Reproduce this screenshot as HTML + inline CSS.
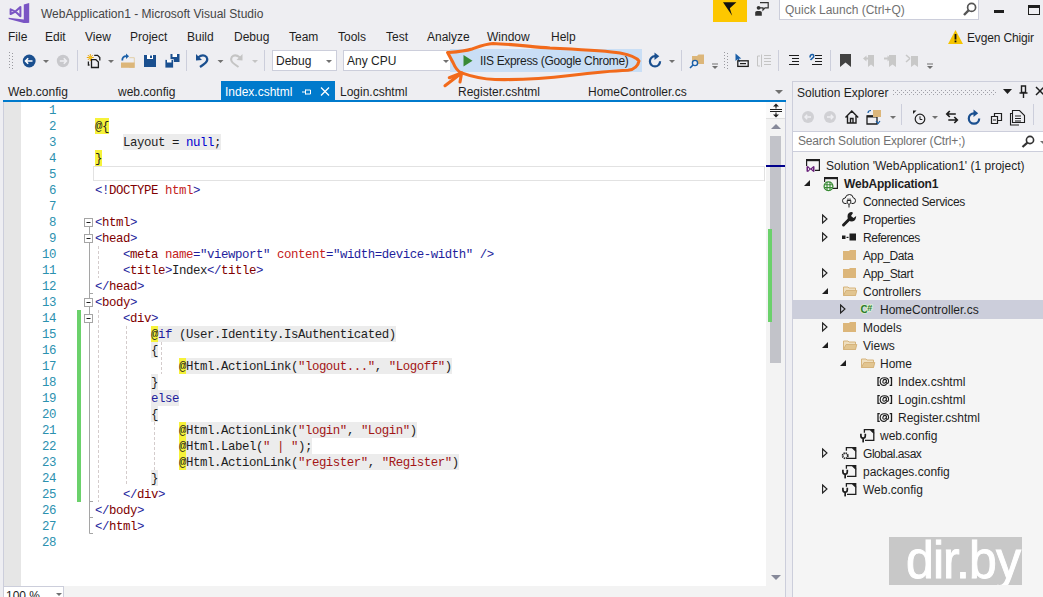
<!DOCTYPE html>
<html><head><meta charset="utf-8">
<style>
*{margin:0;padding:0;box-sizing:border-box}
html,body{width:1043px;height:597px;overflow:hidden;background:#eeeef2;font-family:"Liberation Sans",sans-serif;font-size:12px;color:#1e1e1e;position:relative}
.a{position:absolute}
.t{position:absolute;white-space:pre;line-height:14px}
svg{position:absolute;overflow:visible}
#editor{position:absolute;left:3px;top:102px;width:763px;height:484px;background:#fff}
#margin{position:absolute;left:3px;top:102px;width:18px;height:484px;background:#e6e6e6;border-left:1px solid #cccedb}
.code{position:absolute;font-family:"Liberation Mono",monospace;font-size:12.4px;letter-spacing:-0.44px;line-height:16px;white-space:pre;color:#1e1e1e}
.ln{position:absolute;left:0;width:56px;text-align:right;font-family:"Liberation Mono",monospace;font-size:12.4px;letter-spacing:-0.44px;line-height:16px;color:#2b91af}
.rz{position:absolute;height:16px;background:#ececec}
.at{position:absolute;height:16px;background:#f6f23a}
.sep{position:absolute;width:1px;height:20px;background:#cccedb}
.dd{position:absolute;width:0;height:0;border-left:3px solid transparent;border-right:3px solid transparent;border-top:3px solid #717171}
.se{position:absolute;white-space:pre;line-height:14px}
.tri{position:absolute;width:0;height:0;border-top:4px solid transparent;border-bottom:4px solid transparent;border-left:5px solid #1e1e1e}
.tri.o{border-left-color:#1e1e1e}
</style></head><body>
<!-- ===== TITLE BAR ===== -->
<svg style="left:0;top:0" width="40" height="26" viewBox="0 0 40 26">
 <path fill="#7a55c4" d="M23.8 4.6 L29.2 3 L29.2 22.8 L23.8 22.8 Z"/>
 <path fill="#7a55c4" d="M8.6 17.8 L23.8 19.6 L29.2 22.8 L23.8 23 L8.6 18.9 Z"/>
 <path fill="none" stroke="#7a55c4" stroke-width="2" stroke-linejoin="round" d="M10.6 9.3 L15.4 11.6 L20.4 7 V16.3 L15.4 11.6 L10.6 14 Z"/>
</svg>
<div class="t" style="left:41px;top:7px;color:#444">WebApplication1 - Microsoft Visual Studio</div>

<!-- notification -->
<div class="a" style="left:713px;top:0;width:34px;height:22px;background:#fdc700"></div>
<svg style="left:0;top:0" width="800" height="24" viewBox="0 0 800 24">
 <path d="M723 2.3 L736.4 2.3 L729.8 8.3 L732.2 15.8 Z" fill="#111"/>
 <path d="M760 2.7 H768.2 V7.8 H765 L763 10 V7.8 H760" fill="none" stroke="#333" stroke-width="1.2"/>
 <circle cx="758.6" cy="7.8" r="1.9" fill="#333"/>
 <path d="M755.2 15.8 V12.5 Q755.2 11 757 11 H760 Q761.8 11 761.8 12.5 V15.8 Z" fill="#333"/>
</svg>
<div class="a" style="left:779px;top:0;width:200px;height:20px;background:#fff;border:1px solid #cccedb;border-top:none"></div>
<div class="t" style="left:785px;top:3px;color:#717171">Quick Launch (Ctrl+Q)</div>
<svg style="left:963px;top:2px" width="14" height="14" viewBox="0 0 14 14"><circle cx="8.6" cy="5.4" r="4" fill="none" stroke="#555" stroke-width="1.7"/><path d="M5.8 8.2 L1 13" stroke="#555" stroke-width="2.4"/></svg>
<div class="a" style="left:994px;top:10px;width:10px;height:3px;background:#1e1e1e"></div>
<div class="a" style="left:1028px;top:5px;width:12px;height:10px;border:1px solid #1e1e1e;border-top:3px solid #1e1e1e"></div>

<!-- ===== MENU ===== -->
<div class="t" style="left:8px;top:30px">File</div>
<div class="t" style="left:45px;top:30px">Edit</div>
<div class="t" style="left:85px;top:30px">View</div>
<div class="t" style="left:130px;top:30px">Project</div>
<div class="t" style="left:187px;top:30px">Build</div>
<div class="t" style="left:234px;top:30px">Debug</div>
<div class="t" style="left:289px;top:30px">Team</div>
<div class="t" style="left:338px;top:30px">Tools</div>
<div class="t" style="left:386px;top:30px">Test</div>
<div class="t" style="left:427px;top:30px">Analyze</div>
<div class="t" style="left:487px;top:30px">Window</div>
<div class="t" style="left:551px;top:30px">Help</div>
<svg style="left:948px;top:30px" width="15" height="14" viewBox="0 0 15 14"><path fill="#f5c400" d="M7.5 0 L15 14 L0 14 Z"/><rect x="6.6" y="4" width="1.8" height="5.5" fill="#111"/><rect x="6.6" y="10.5" width="1.8" height="1.8" fill="#111"/></svg>
<div class="t" style="left:967px;top:31px;letter-spacing:-0.15px">Evgen Chigir</div>

<!-- ===== TOOLBAR ===== -->
<svg style="left:0;top:0" width="1043" height="80" viewBox="0 0 1043 80">
 <g fill="#9a9aa0">
  <rect x="9" y="52" width="1" height="1"/><rect x="9" y="55" width="1" height="1"/><rect x="9" y="58" width="1" height="1"/><rect x="9" y="61" width="1" height="1"/><rect x="9" y="64" width="1" height="1"/><rect x="9" y="67" width="1" height="1"/>
  <rect x="12" y="53" width="1" height="1"/><rect x="12" y="56" width="1" height="1"/><rect x="12" y="59" width="1" height="1"/><rect x="12" y="62" width="1" height="1"/><rect x="12" y="65" width="1" height="1"/><rect x="12" y="68" width="1" height="1"/>
  <rect x="724" y="52" width="1" height="1"/><rect x="724" y="55" width="1" height="1"/><rect x="724" y="58" width="1" height="1"/><rect x="724" y="61" width="1" height="1"/><rect x="724" y="64" width="1" height="1"/><rect x="724" y="67" width="1" height="1"/>
  <rect x="727" y="53" width="1" height="1"/><rect x="727" y="56" width="1" height="1"/><rect x="727" y="59" width="1" height="1"/><rect x="727" y="62" width="1" height="1"/><rect x="727" y="65" width="1" height="1"/><rect x="727" y="68" width="1" height="1"/>
 </g>
 <!-- back -->
 <circle cx="29.2" cy="61" r="6.4" fill="#1a4f8f"/>
 <path d="M25.5 61 H32.5 M28.2 58.2 L25.5 61 L28.2 63.8" fill="none" stroke="#fff" stroke-width="1.6"/>
 <path d="M43 60 H49 L46 63 Z" fill="#717171"/>
 <!-- forward gray -->
 <circle cx="63" cy="61" r="6.2" fill="#c8c8cc"/>
 <path d="M59.8 61 H66.4 M63.8 58.3 L66.4 61 L63.8 63.7" fill="none" stroke="#eeeef2" stroke-width="1.6"/>
 <rect x="77" y="50" width="1" height="21" fill="#cccedb"/>
 <!-- new project -->
 <g stroke="#e8a317" stroke-width="1"><path d="M90.3 54 V61 M86.8 57.5 H93.8 M87.8 55 L92.8 60 M92.8 55 L87.8 60"/></g>
 <circle cx="90.3" cy="57.5" r="1.6" fill="#f5c518"/>
 <path d="M94.2 55.3 H97.6 L99.8 57.5 V60.5 M88.4 61.4 V65 H89.5" fill="none" stroke="#1e1e1e" stroke-width="1.3"/>
 <path d="M91.5 59.7 H95.9 L98.4 62 V67.5 H91.5 Z" fill="none" stroke="#1e1e1e" stroke-width="1.3"/>
<path d="M108 60 H114 L111 63 Z" fill="#717171"/>
 <!-- open -->
 <path d="M129.3 57.7 H134.3 V67.5 H129.3" fill="none" stroke="#e2cfa8" stroke-width="1"/>
 <path d="M121 62.5 H134.6 V67.8 H121 Z" fill="#dcb67a"/>
 <path d="M122.3 60.5 Q122 56.2 126.5 56.2" fill="none" stroke="#1a5fa8" stroke-width="1.8"/>
 <path d="M126 53.5 L129 56.2 L126 58.9 Z" fill="#1a5fa8"/>
<!-- save -->
 <path d="M144 55 H156 V67 H144 Z" fill="#1a4f8f"/>
 <rect x="147" y="55" width="6" height="4" fill="#fff"/><rect x="150" y="55.5" width="2" height="2.5" fill="#1a4f8f"/>
 <!-- save all -->
 <path d="M170.5 54 H179.5 V62 H170.5 Z" fill="#1a4f8f"/><rect x="172.5" y="54" width="4.5" height="3" fill="#fff"/>
 <path d="M165 59.5 H173.5 V68 H165 Z" fill="#1a4f8f" stroke="#eeeef2" stroke-width="0.8"/><rect x="167" y="59.5" width="4.5" height="3" fill="#fff"/>
 <rect x="186" y="50" width="1" height="21" fill="#cccedb"/>
 <!-- undo -->
 <path d="M198 57.5 Q203 53.5 206.5 57 Q209 61 203.5 64.5 L200 67" fill="none" stroke="#1a4f8f" stroke-width="2.2"/>
 <path d="M196 54 L196 60.5 L202 60 Z" fill="#1a4f8f"/>
 <path d="M217.5 60 H223.5 L220.5 63 Z" fill="#717171"/>
 <!-- redo gray -->
 <path d="M240 57.5 Q235 53.5 231.8 57 Q229.5 61 235 64.5 L238.5 67" fill="none" stroke="#c4c4c4" stroke-width="2"/>
 <path d="M242.5 54 L242.5 60.5 L236.5 60 Z" fill="#c4c4c4"/>
 <path d="M252 60 H258 L255 63 Z" fill="#c4c4c4"/>
 <rect x="264" y="50" width="1" height="21" fill="#cccedb"/>
 <!-- refresh -->
 <path d="M655 56.2 A5.1 5.1 0 1 0 660.1 61.3" fill="none" stroke="#1a4f8f" stroke-width="2.2"/>
 <path d="M654.5 52.5 L659.3 56.2 L654.5 59.9 Z" fill="#1a4f8f"/>
 <path d="M669 60 H675 L672 63 Z" fill="#717171"/>
 <rect x="681" y="50" width="1" height="21" fill="#cccedb"/>
 <!-- find in files -->
 <path d="M692 56 H697 L698.5 54.5 H704 V64 H692 Z" fill="#dcb67a"/>
 <circle cx="695" cy="63" r="2.6" fill="#eeeef2" stroke="#1a5fa8" stroke-width="1.4"/>
 <path d="M693 65 L690 68" stroke="#1a5fa8" stroke-width="1.6"/>
 <rect x="712" y="63.5" width="6" height="1" fill="#717171"/><path d="M712 66 H718 L715 69 Z" fill="#717171"/>
 <!-- pointer box -->
 <path d="M735.5 53.5 L735.5 61 L737.5 59.3 L739 62 L740.2 61.3 L738.8 58.7 L741.3 58.5 Z" fill="#1a5fa8"/>
 <rect x="737.8" y="60.8" width="10.4" height="5.6" fill="none" stroke="#1e1e1e" stroke-width="1.3"/>
 <rect x="740" y="63" width="6" height="1.2" fill="#1e1e1e"/>
 <!-- gray lines icon -->
 <g stroke="#c4c4c4" stroke-width="1"><path d="M757.5 56 V66 M757.5 56 H760 M757.5 66 H760 M761.5 54.5 V67 M764 55.5 H771 M764 58.5 H771 M764 61.5 H771 M764 64.5 H771"/></g>
 <rect x="778" y="50" width="1" height="21" fill="#cccedb"/>
 <!-- indent icons -->
 <g stroke="#1e1e1e" stroke-width="1"><path d="M789 55.5 H799 M792 58.5 H799 M792 61.5 H799 M789 64.5 H799"/></g>
 <g stroke="#1e1e1e" stroke-width="1"><path d="M815 58.5 H822 M815 61.5 H822 M812 64.5 H822 M815 55.5 H822"/></g>
 <path d="M810 57.5 Q810 54.5 812.3 54.5 Q814.2 54.5 813.6 57 L810.5 60" fill="none" stroke="#1a5fa8" stroke-width="1.5"/>
 <rect x="830" y="50" width="1" height="21" fill="#cccedb"/>
 <!-- bookmark -->
 <path d="M840 54 H851 V67 L845.5 62.5 L840 67 Z" fill="#424242"/>
 <!-- gray bookmark nav -->
 <g fill="#c8c8c8"><path d="M868 55 H874 V67 L871 64.5 L868 67 Z"/><path d="M863 58.5 L866.5 55.5 V57.5 H868 V59.5 H866.5 V61.5 Z"/>
 <path d="M889 55 H896 V67 L892.5 64.5 L889 67 Z"/><path d="M884 57.5 H887.5 V55.5 L891 58.5 L887.5 61.5 V59.5 H884 Z"/>
 <path d="M911 56 H918 V67 L914.5 64.5 L911 67 Z"/><path d="M906 55 L910 58.5 M906 62 L910 58.5" stroke="#c8c8c8" stroke-width="1.6"/></g>
 <rect x="927" y="63.5" width="6" height="1" fill="#717171"/><path d="M927 66 H933 L930 69 Z" fill="#717171"/>
</svg>
<!-- combos -->
<div class="a" style="left:272px;top:50px;width:65px;height:21px;background:#fff;border:1px solid #cccedb"></div>
<div class="t" style="left:276px;top:54px">Debug</div>
<div class="dd" style="left:326px;top:60px"></div>
<div class="a" style="left:343px;top:50px;width:112px;height:21px;background:#fff;border:1px solid #cccedb"></div>
<div class="t" style="left:347px;top:54px">Any CPU</div>
<div class="dd" style="left:443px;top:60px"></div>
<div class="a" style="left:450px;top:49px;width:192px;height:23px;background:#c9def5"></div>
<svg style="left:463px;top:55px" width="10" height="12" viewBox="0 0 10 12"><path d="M0.5 0 L9.5 5.8 L0.5 11.6 Z" fill="#388a34"/></svg>
<div class="t" style="left:480px;top:54px;color:#1e1e1e;letter-spacing:-0.33px">IIS Express (Google Chrome)</div>


<!-- ===== TABS ===== -->
<div class="t" style="left:8px;top:85px">Web.config</div>
<div class="t" style="left:118px;top:85px">web.config</div>
<div class="a" style="left:221px;top:81px;width:114px;height:20px;background:#007acc"></div>
<div class="t" style="left:225px;top:85px;color:#fff">Index.cshtml</div>
<svg style="left:302px;top:88px" width="9" height="8" viewBox="0 0 9 8"><path fill="none" stroke="#fff" stroke-width="1" d="M0 4 H3 M3.5 1.5 V6.5 M3.5 2 H8.5 V6 H3.5"/></svg>
<svg style="left:320px;top:87px" width="10" height="9" viewBox="0 0 10 9"><path stroke="#fff" stroke-width="1.3" d="M1 0.5 L9 8.5 M9 0.5 L1 8.5"/></svg>
<div class="t" style="left:340px;top:85px">Login.cshtml</div>
<div class="t" style="left:458px;top:85px">Register.cshtml</div>
<div class="t" style="left:588px;top:85px">HomeController.cs</div>
<div class="dd" style="left:775px;top:90px;border-left-width:4px;border-right-width:4px;border-top-width:4px"></div>
<div class="a" style="left:3px;top:100px;width:783px;height:2px;background:#007acc"></div>

<!-- ===== EDITOR ===== -->
<div id="editor"></div>
<div id="margin"></div>
<!-- current line -->
<div class="a" style="left:93px;top:166px;width:672px;height:15px;border:1px solid #e2e2e2"></div>
<!-- green change bar -->
<div class="a" style="left:77px;top:310px;width:4px;height:192px;background:#6bd16b"></div>
<!--OUTLINE-->
<div class="a" style="left:0;top:0;width:0;height:0" id="codewrap"></div>
<div class="at" style="left:95px;top:118px;width:14px"></div>
<div class="rz" style="left:123px;top:134px;width:98px"></div>
<div class="at" style="left:95px;top:150px;width:7px"></div>
<div class="at" style="left:151px;top:326px;width:7px"></div>
<div class="rz" style="left:158px;top:326px;width:238px"></div>
<div class="rz" style="left:151px;top:342px;width:7px"></div>
<div class="at" style="left:179px;top:358px;width:7px"></div>
<div class="rz" style="left:186px;top:358px;width:266px"></div>
<div class="rz" style="left:151px;top:374px;width:7px"></div>
<div class="rz" style="left:151px;top:390px;width:28px"></div>
<div class="rz" style="left:151px;top:406px;width:7px"></div>
<div class="at" style="left:179px;top:422px;width:7px"></div>
<div class="rz" style="left:186px;top:422px;width:231px"></div>
<div class="at" style="left:179px;top:438px;width:7px"></div>
<div class="rz" style="left:186px;top:438px;width:126px"></div>
<div class="at" style="left:179px;top:454px;width:7px"></div>
<div class="rz" style="left:186px;top:454px;width:273px"></div>
<div class="rz" style="left:151px;top:470px;width:7px"></div>
<svg style="left:0;top:0" width="800" height="597" viewBox="0 0 800 597"><path d="M89.5 226 V533.5 H93" fill="none" stroke="#a5a5a5" stroke-width="1"/><path d="M89.5 293.5 H93" fill="none" stroke="#a5a5a5" stroke-width="1"/><path d="M89.5 517.5 H93" fill="none" stroke="#a5a5a5" stroke-width="1"/><path d="M89.5 501.5 H93" fill="none" stroke="#a5a5a5" stroke-width="1"/><rect x="84.5" y="218.5" width="8" height="8" fill="#fff" stroke="#a5a5a5" stroke-width="1"/><path d="M86.5 222.5 H90.5" stroke="#1e1e1e" stroke-width="1"/><rect x="84.5" y="234.5" width="8" height="8" fill="#fff" stroke="#a5a5a5" stroke-width="1"/><path d="M86.5 238.5 H90.5" stroke="#1e1e1e" stroke-width="1"/><rect x="84.5" y="298.5" width="8" height="8" fill="#fff" stroke="#a5a5a5" stroke-width="1"/><path d="M86.5 302.5 H90.5" stroke="#1e1e1e" stroke-width="1"/><rect x="84.5" y="314.5" width="8" height="8" fill="#fff" stroke="#a5a5a5" stroke-width="1"/><path d="M86.5 318.5 H90.5" stroke="#1e1e1e" stroke-width="1"/><path d="M98.5 246 V278" stroke="#d4cccc" stroke-width="1" stroke-dasharray="3 2"/><path d="M98.5 310 V502" stroke="#d4cccc" stroke-width="1" stroke-dasharray="3 2"/><path d="M126.5 326 V486" stroke="#d4cccc" stroke-width="1" stroke-dasharray="3 2"/><path d="M161.5 342 V374" stroke="#d4cccc" stroke-width="1" stroke-dasharray="3 2"/><path d="M154.5 422 V470" stroke="#d4cccc" stroke-width="1" stroke-dasharray="3 2"/></svg>
<div class="ln" style="top:103px">1</div>
<div class="ln" style="top:119px">2</div>
<div class="code" style="left:95px;top:119px"><span style="color:#1e1e1e">@</span><span style="color:#1e1e1e">{</span></div>
<div class="ln" style="top:135px">3</div>
<div class="code" style="left:95px;top:135px">    <span style="color:#1e1e1e">Layout = </span><span style="color:#0000d0">null</span><span style="color:#1e1e1e">;</span></div>
<div class="ln" style="top:151px">4</div>
<div class="code" style="left:95px;top:151px"><span style="color:#1e1e1e">}</span></div>
<div class="ln" style="top:167px">5</div>
<div class="ln" style="top:183px">6</div>
<div class="code" style="left:95px;top:183px"><span style="color:#1e1e9c">&lt;!</span><span style="color:#800000">DOCTYPE </span><span style="color:#c42020">html</span><span style="color:#1e1e9c">&gt;</span></div>
<div class="ln" style="top:199px">7</div>
<div class="ln" style="top:215px">8</div>
<div class="code" style="left:95px;top:215px"><span style="color:#1e1e9c">&lt;</span><span style="color:#800000">html</span><span style="color:#1e1e9c">&gt;</span></div>
<div class="ln" style="top:231px">9</div>
<div class="code" style="left:95px;top:231px"><span style="color:#1e1e9c">&lt;</span><span style="color:#800000">head</span><span style="color:#1e1e9c">&gt;</span></div>
<div class="ln" style="top:247px">10</div>
<div class="code" style="left:95px;top:247px">    <span style="color:#1e1e9c">&lt;</span><span style="color:#800000">meta </span><span style="color:#c42020">name</span><span style="color:#1e1e9c">=&quot;viewport&quot; </span><span style="color:#c42020">content</span><span style="color:#1e1e9c">=&quot;width=device-width&quot; /&gt;</span></div>
<div class="ln" style="top:263px">11</div>
<div class="code" style="left:95px;top:263px">    <span style="color:#1e1e9c">&lt;</span><span style="color:#800000">title</span><span style="color:#1e1e9c">&gt;</span><span style="color:#1e1e1e">Index</span><span style="color:#1e1e9c">&lt;/</span><span style="color:#800000">title</span><span style="color:#1e1e9c">&gt;</span></div>
<div class="ln" style="top:279px">12</div>
<div class="code" style="left:95px;top:279px"><span style="color:#1e1e9c">&lt;/</span><span style="color:#800000">head</span><span style="color:#1e1e9c">&gt;</span></div>
<div class="ln" style="top:295px">13</div>
<div class="code" style="left:95px;top:295px"><span style="color:#1e1e9c">&lt;</span><span style="color:#800000">body</span><span style="color:#1e1e9c">&gt;</span></div>
<div class="ln" style="top:311px">14</div>
<div class="code" style="left:95px;top:311px">    <span style="color:#1e1e9c">&lt;</span><span style="color:#800000">div</span><span style="color:#1e1e9c">&gt;</span></div>
<div class="ln" style="top:327px">15</div>
<div class="code" style="left:95px;top:327px">        <span style="color:#1e1e1e">@</span><span style="color:#1e1e9c">if</span><span style="color:#1e1e1e"> (User.Identity.IsAuthenticated)</span></div>
<div class="ln" style="top:343px">16</div>
<div class="code" style="left:95px;top:343px">        <span style="color:#1e1e1e">{</span></div>
<div class="ln" style="top:359px">17</div>
<div class="code" style="left:95px;top:359px">            <span style="color:#1e1e1e">@</span><span style="color:#1e1e1e">Html.ActionLink(</span><span style="color:#a31515">&quot;logout...&quot;</span><span style="color:#1e1e1e">, </span><span style="color:#a31515">&quot;Logoff&quot;</span><span style="color:#1e1e1e">)</span></div>
<div class="ln" style="top:375px">18</div>
<div class="code" style="left:95px;top:375px">        <span style="color:#1e1e1e">}</span></div>
<div class="ln" style="top:391px">19</div>
<div class="code" style="left:95px;top:391px">        <span style="color:#1e1e9c">else</span></div>
<div class="ln" style="top:407px">20</div>
<div class="code" style="left:95px;top:407px">        <span style="color:#1e1e1e">{</span></div>
<div class="ln" style="top:423px">21</div>
<div class="code" style="left:95px;top:423px">            <span style="color:#1e1e1e">@</span><span style="color:#1e1e1e">Html.ActionLink(</span><span style="color:#a31515">&quot;login&quot;</span><span style="color:#1e1e1e">, </span><span style="color:#a31515">&quot;Login&quot;</span><span style="color:#1e1e1e">)</span></div>
<div class="ln" style="top:439px">22</div>
<div class="code" style="left:95px;top:439px">            <span style="color:#1e1e1e">@</span><span style="color:#1e1e1e">Html.Label(</span><span style="color:#a31515">&quot; | &quot;</span><span style="color:#1e1e1e">);</span></div>
<div class="ln" style="top:455px">23</div>
<div class="code" style="left:95px;top:455px">            <span style="color:#1e1e1e">@</span><span style="color:#1e1e1e">Html.ActionLink(</span><span style="color:#a31515">&quot;register&quot;</span><span style="color:#1e1e1e">, </span><span style="color:#a31515">&quot;Register&quot;</span><span style="color:#1e1e1e">)</span></div>
<div class="ln" style="top:471px">24</div>
<div class="code" style="left:95px;top:471px">        <span style="color:#1e1e1e">}</span></div>
<div class="ln" style="top:487px">25</div>
<div class="code" style="left:95px;top:487px">    <span style="color:#1e1e9c">&lt;/</span><span style="color:#800000">div</span><span style="color:#1e1e9c">&gt;</span></div>
<div class="ln" style="top:503px">26</div>
<div class="code" style="left:95px;top:503px"><span style="color:#1e1e9c">&lt;/</span><span style="color:#800000">body</span><span style="color:#1e1e9c">&gt;</span></div>
<div class="ln" style="top:519px">27</div>
<div class="code" style="left:95px;top:519px"><span style="color:#1e1e9c">&lt;/</span><span style="color:#800000">html</span><span style="color:#1e1e9c">&gt;</span></div>
<div class="ln" style="top:535px">28</div>

<!-- editor scrollbar -->
<div class="a" style="left:766px;top:102px;width:20px;height:484px;background:#f3f3f3"></div>
<div class="a" style="left:766px;top:102px;width:20px;height:17px;background:#fafafa;border-bottom:1px solid #e0e0e0"></div>
<svg style="left:768px;top:103px" width="16" height="15" viewBox="0 0 16 15"><path fill="none" stroke="#1e1e1e" stroke-width="1.1" d="M2 6.5 H14 M2 8.5 H14 M8 2.5 V5.5 M8 9.5 V12.5"/><path fill="#1e1e1e" d="M8 0.5 L5 3.5 H11 Z M8 14.5 L5 11.5 H11 Z"/></svg>
<div class="a" style="left:771px;top:124px;width:0;height:0;border-left:5px solid transparent;border-right:5px solid transparent;border-bottom:5px solid #868999"></div>
<div class="a" style="left:770px;top:136px;width:11px;height:227px;background:#c2c3c9"></div>
<div class="a" style="left:768px;top:229px;width:4px;height:93px;background:#6bd16b"></div>
<div class="a" style="left:766px;top:165px;width:20px;height:2px;background:#00008b"></div>
<div class="a" style="left:771px;top:575px;width:0;height:0;border-left:5px solid transparent;border-right:5px solid transparent;border-top:5px solid #868999"></div>
<div class="a" style="left:785px;top:102px;width:1px;height:495px;background:#cccedb"></div>
<!-- bottom bar -->
<div class="a" style="left:3px;top:586px;width:782px;height:11px;background:#f3f3f3"></div>
<div class="a" style="left:3px;top:586px;width:61px;height:14px;background:#fff;border:1px solid #cccedb"></div>
<div class="t" style="left:6px;top:589px">100 %</div>
<div class="dd" style="left:56px;top:593px"></div>

<!-- annotation -->
<svg style="left:0;top:0" width="1043" height="100" viewBox="0 0 1043 100">
 <g fill="none" stroke="#f26a1b" stroke-width="3.1" stroke-linecap="round" stroke-linejoin="round">
  <path d="M461.6 72.9 C457.5 71.5 455.5 68.5 453 62.5 L447.6 52.5 C455 52 464 51.5 472 49 C479 46.5 485 44 493 43.5 C510 44 530 46.5 550 48 C580 49.5 605 50.5 620 53 C630 55 637 58 639 61 C638 66 634 69.5 628 70.3 C610 71 595 72.5 570 75.5 C545 78.5 520 80 495 79.5 C480 79 470 76 461.6 72.9"/>
  <path d="M445 85.7 L461.6 72.9 M449.3 77.7 L461.6 72.9 M460 82 L461.6 72.9"/>
 </g>
</svg>
<div class="a" style="left:792px;top:81px;width:251px;height:516px;background:#eeeef2;border-left:1px solid #cccedb;border-top:1px solid #cccedb"></div>
<div class="t" style="left:797px;top:86px">Solution Explorer</div>
<svg style="left:893px;top:90px" width="103" height="6" viewBox="0 0 103 6"><defs><pattern id="gp" width="4" height="4" patternUnits="userSpaceOnUse"><rect x="0" y="0" width="1" height="1" fill="#a0a0a8"/><rect x="2" y="2" width="1" height="1" fill="#a0a0a8"/></pattern></defs><rect width="103" height="5" fill="url(#gp)"/></svg>
<svg style="left:1003px;top:89px" width="9" height="5" viewBox="0 0 9 5"><path d="M0 0 H9 L4.5 5 Z" fill="#1e1e1e"/></svg>
<svg style="left:1019px;top:85px" width="9" height="14" viewBox="0 0 9 14"><path d="M2.5 1 H6.5 V7.5 H2.5 Z M0.5 8 H8.5 M4.5 8 V13" fill="none" stroke="#1e1e1e" stroke-width="1.4"/></svg>
<svg style="left:1035px;top:86px" width="10" height="10" viewBox="0 0 10 10"><path d="M1 1 L9 9 M9 1 L1 9" stroke="#1e1e1e" stroke-width="1.5"/></svg>
<svg style="left:0;top:0" width="1043" height="160" viewBox="0 0 1043 160">
 <circle cx="808" cy="117" r="6" fill="#d0d0d4"/><path d="M805 117 H811 M807.2 114.8 L805 117 L807.2 119.2" fill="none" stroke="#eeeef2" stroke-width="1.4"/>
 <circle cx="830" cy="117" r="6" fill="#d0d0d4"/><path d="M827 117 H833 M830.8 114.8 L833 117 L830.8 119.2" fill="none" stroke="#eeeef2" stroke-width="1.4"/>
 <path d="M845.5 117.5 L851.8 111 L858.2 117.5 M847.5 116 V123 H856 V116 M850.5 123 V118.5 H853 V123" fill="none" stroke="#1e1e1e" stroke-width="1.4"/>
 <path d="M867 116 H877 V124 H867 Z" fill="none" stroke="#1e1e1e" stroke-width="1.3"/><rect x="867" y="115.5" width="10" height="2" fill="#1e1e1e"/>
 <rect x="873" y="110" width="8" height="7" fill="#dcb67a"/>
 <path d="M868 113 Q868 110.5 871 110.5" fill="none" stroke="#1a5fa8" stroke-width="1.2"/><path d="M880 121 L878 123.5 L876 121" fill="none" stroke="#1a5fa8" stroke-width="1.2"/>
 <path d="M890 116 H896 L893 119 Z" fill="#717171"/>
 <rect x="901" y="104" width="1" height="21" fill="#cccedb"/>
 <path d="M913 110.5 L916.5 110.5 L913 114 Z" fill="#1e1e1e"/>
 <circle cx="920" cy="119" r="4.8" fill="none" stroke="#1e1e1e" stroke-width="1.2"/><path d="M920 116.3 V119.5 H922.3" fill="none" stroke="#1e1e1e" stroke-width="1"/>
 <path d="M932 116 H938 L935 119 Z" fill="#717171"/>
 <path d="M947 114 H955.8 M949.8 111 L946.8 114 L949.8 117 M948.3 120 H957.3 M954.3 117 L957.3 120 L954.3 123" fill="none" stroke="#1e1e1e" stroke-width="1.7"/>
 <path d="M974 113.3 A5.2 5.2 0 1 0 979.2 118.5" fill="none" stroke="#1a4f8f" stroke-width="2.2"/><path d="M973.5 109.6 L978.2 113.3 L973.5 117 Z" fill="#1a4f8f"/>
 <path d="M991.5 116.5 H997.5 V123.5 H991.5 Z M994.5 116.5 V113.5 H1001.5 V120.5 H997.5 M993 120 H996" fill="none" stroke="#1e1e1e" stroke-width="1.2"/>
 <path d="M1013 113.5 H1010.5 V125 H1019 M1012.5 110.5 H1019.5 L1024.5 115.5 V122.5 H1012.5 Z M1015 116 H1021 M1015 118.5 H1021 M1015 121 H1021" fill="none" stroke="#1e1e1e" stroke-width="1.1"/>
 <rect x="1033" y="104" width="1" height="21" fill="#cccedb"/>
</svg>
<div class="a" style="left:793px;top:131px;width:250px;height:21px;background:#fff;border-top:1px solid #cccedb;border-bottom:1px solid #cccedb"></div>
<div class="t" style="left:798px;top:134px;color:#717171;letter-spacing:-0.18px">Search Solution Explorer (Ctrl+;)</div>
<svg style="left:1021px;top:135px" width="14" height="13" viewBox="0 0 14 13"><circle cx="9" cy="5" r="3.6" fill="none" stroke="#333" stroke-width="1.6"/><path d="M6.4 7.6 L1.5 12" stroke="#333" stroke-width="2.2"/></svg>
<div class="dd" style="left:1040px;top:141px"></div>
<div class="a" style="left:793px;top:152px;width:250px;height:445px;background:#f5f5f5"></div>
<div class="a" style="left:793px;top:300px;width:250px;height:19px;background:#cccedb"></div>
<div class="se" style="left:826px;top:159px;">Solution &#x27;WebApplication1&#x27; (1 project)</div>
<div class="se" style="left:844px;top:177px;font-weight:bold;letter-spacing:-0.2px;">WebApplication1</div>
<div class="se" style="left:863px;top:195px;letter-spacing:-0.3px;">Connected Services</div>
<div class="se" style="left:863px;top:213px;letter-spacing:-0.25px;">Properties</div>
<div class="se" style="left:863px;top:231px;letter-spacing:-0.45px;">References</div>
<div class="se" style="left:863px;top:249px;letter-spacing:-0.4px;">App_Data</div>
<div class="se" style="left:863px;top:267px;letter-spacing:-0.35px;">App_Start</div>
<div class="se" style="left:863px;top:285px;">Controllers</div>
<div class="se" style="left:880px;top:303px;">HomeController.cs</div>
<div class="se" style="left:863px;top:321px;">Models</div>
<div class="se" style="left:863px;top:339px;">Views</div>
<div class="se" style="left:880px;top:357px;">Home</div>
<div class="se" style="left:898px;top:375px;">Index.cshtml</div>
<div class="se" style="left:898px;top:393px;">Login.cshtml</div>
<div class="se" style="left:898px;top:411px;">Register.cshtml</div>
<div class="se" style="left:880px;top:429px;">web.config</div>
<div class="se" style="left:863px;top:447px;letter-spacing:-0.45px;">Global.asax</div>
<div class="se" style="left:863px;top:465px;">packages.config</div>
<div class="se" style="left:863px;top:483px;">Web.config</div>
<svg style="left:0;top:0" width="1043" height="597" viewBox="0 0 1043 597"><path d="M806.6 166 V159.6 H819.4 V170.4 H815" fill="none" stroke="#1e1e1e" stroke-width="1.2"/><rect x="806" y="159" width="14" height="2.2" fill="#1e1e1e"/><path d="M806.5 166.5 L808 166 L810.5 168.5 L813.5 166 L814.5 166.5 V171.5 L813.5 172 L810.5 169.5 L808 172 L806.5 171.5 Z" fill="#68217a"/><path d="M808 167.8 V170.5 L809.5 169.1 Z M812 169 L813 168 V170 Z" fill="#f5f5f5"/><path d="M804 186 L810 180 L810 186 Z" fill="#1e1e1e"/><path d="M824.6 182 V177.6 H837.4 V188.4 H833" fill="none" stroke="#1e1e1e" stroke-width="1.2"/><rect x="824" y="177" width="14" height="2.2" fill="#1e1e1e"/><circle cx="828.5" cy="186.2" r="4.4" fill="#f5f5f5" stroke="#388a34" stroke-width="1.3"/><path d="M827 182 V190.5 M830 182 V190.5 M824.3 184.8 H832.7 M824.3 187.6 H832.7" stroke="#388a34" stroke-width="1.1"/><path d="M846.5 203.5 H845 Q842.5 203.5 842.5 200.7 Q842.5 198 845.2 198 Q846 194.5 849.5 194.5 Q852.8 194.5 853.2 197.8 Q855.5 198 855.5 200.7 Q855.5 203.5 853 203.5 H851.5" fill="none" stroke="#1e1e1e" stroke-width="1"/><path d="M847.2 200.5 H850.8 V203 L849 204.5 L847.2 203 Z" fill="none" stroke="#1e1e1e" stroke-width="1"/><path d="M849 204.5 V207.5 M848 198.5 V200.5 M850 198.5 V200.5" stroke="#1e1e1e" stroke-width="1"/><path d="M822.6 215 L827 219 L822.6 223 Z" fill="none" stroke="#1e1e1e" stroke-width="1.1"/><path d="M843.5 225 L849 219.5" stroke="#1e1e1e" stroke-width="3" stroke-linecap="round"/><path d="M852 212 Q847.5 212 847.5 216.5 Q847.5 221.5 852 221.5 Q856 221 856.2 216 L853.5 218 L851 216 L853 213 Z" fill="#1e1e1e"/><path d="M822.6 233 L827 237 L822.6 241 Z" fill="none" stroke="#1e1e1e" stroke-width="1.1"/><rect x="842" y="235.5" width="3.5" height="3.5" fill="#1e1e1e"/><rect x="846.5" y="236.8" width="2" height="1.2" fill="#1e1e1e"/><rect x="849.5" y="233.5" width="6.5" height="7" fill="#1e1e1e"/><path d="M843 251 H849 L850 250 H856 V260 H843 Z" fill="#dcb67a"/><path d="M822.6 269 L827 273 L822.6 277 Z" fill="none" stroke="#1e1e1e" stroke-width="1.1"/><path d="M843 269 H849 L850 268 H856 V278 H843 Z" fill="#dcb67a"/><path d="M822 294 L828 288 L828 294 Z" fill="#1e1e1e"/><path d="M843.5 295.5 V287 H848 L849 288 H855.5 V295.5 Z" fill="#efdfbf" stroke="#d6b47c" stroke-width="1"/><path d="M843.5 295.5 L846 290.5 H856.8 L855.5 295.5 Z" fill="#e2c590" stroke="#d6b47c" stroke-width="1"/><path d="M840.6 305 L845 309 L840.6 313 Z" fill="none" stroke="#1e1e1e" stroke-width="1.1"/><g font-family="Liberation Sans" font-weight="bold" fill="#2f7a2c" stroke="#d8f0d0" stroke-width="1.6" paint-order="stroke"><text x="860.5" y="313" font-size="10.5">C</text><text x="867.3" y="311" font-size="9">#</text></g><path d="M822.6 323 L827 327 L822.6 331 Z" fill="none" stroke="#1e1e1e" stroke-width="1.1"/><path d="M843 323 H849 L850 322 H856 V332 H843 Z" fill="#dcb67a"/><path d="M822 348 L828 342 L828 348 Z" fill="#1e1e1e"/><path d="M843.5 349.5 V341 H848 L849 342 H855.5 V349.5 Z" fill="#efdfbf" stroke="#d6b47c" stroke-width="1"/><path d="M843.5 349.5 L846 344.5 H856.8 L855.5 349.5 Z" fill="#e2c590" stroke="#d6b47c" stroke-width="1"/><path d="M840 366 L846 360 L846 366 Z" fill="#1e1e1e"/><path d="M861.5 367.5 V359 H866 L867 360 H873.5 V367.5 Z" fill="#efdfbf" stroke="#d6b47c" stroke-width="1"/><path d="M861.5 367.5 L864 362.5 H874.8 L873.5 367.5 Z" fill="#e2c590" stroke="#d6b47c" stroke-width="1"/><path d="M879.8 377.7 H878 V385.3 H879.8 M889.7 377.7 H891.5 V385.3 H889.7" fill="none" stroke="#1e1e1e" stroke-width="1.3"/><path d="M886.6 384.3 Q884.8 385.6 883.5 385.4 Q880.2 385 880.2 381.6 Q880.2 377.8 884.6 377.8 Q888.6 377.8 888.6 381.4 Q888.6 383.4 887.1 383.4 Q886.1 383.4 886.3 382 L886.6 379.8 M886.4 381.2 Q886 383.2 884.2 383.2 Q882.6 383.2 882.9 381.4 Q883.3 379.4 884.9 379.4 Q886.5 379.4 886.4 381.2" fill="none" stroke="#1e1e1e" stroke-width="1.1"/><path d="M879.8 395.7 H878 V403.3 H879.8 M889.7 395.7 H891.5 V403.3 H889.7" fill="none" stroke="#1e1e1e" stroke-width="1.3"/><path d="M886.6 402.3 Q884.8 403.6 883.5 403.4 Q880.2 403 880.2 399.6 Q880.2 395.8 884.6 395.8 Q888.6 395.8 888.6 399.4 Q888.6 401.4 887.1 401.4 Q886.1 401.4 886.3 400 L886.6 397.8 M886.4 399.2 Q886 401.2 884.2 401.2 Q882.6 401.2 882.9 399.4 Q883.3 397.4 884.9 397.4 Q886.5 397.4 886.4 399.2" fill="none" stroke="#1e1e1e" stroke-width="1.1"/><path d="M879.8 413.7 H878 V421.3 H879.8 M889.7 413.7 H891.5 V421.3 H889.7" fill="none" stroke="#1e1e1e" stroke-width="1.3"/><path d="M886.6 420.3 Q884.8 421.6 883.5 421.4 Q880.2 421 880.2 417.6 Q880.2 413.8 884.6 413.8 Q888.6 413.8 888.6 417.4 Q888.6 419.4 887.1 419.4 Q886.1 419.4 886.3 418 L886.6 415.8 M886.4 417.2 Q886 419.2 884.2 419.2 Q882.6 419.2 882.9 417.4 Q883.3 415.4 884.9 415.4 Q886.5 415.4 886.4 417.2" fill="none" stroke="#1e1e1e" stroke-width="1.1"/><path d="M864.4 432.7 V429.7 H870.4 L873.8 433.1 V440.4 H865" fill="none" stroke="#1e1e1e" stroke-width="1.3"/><path d="M870 429.1 L874.4 433.5 V429.1 Z" fill="#1e1e1e"/><path d="M860.9 433.7 V435.8 Q860.9 438.2 863.1 438.2 Q865.3 438.2 865.3 435.8 V433.7" fill="none" stroke="#1e1e1e" stroke-width="1.7"/><rect x="862.3" y="438" width="1.7" height="4.4" fill="#1e1e1e"/><path d="M822.6 449 L827 453 L822.6 457 Z" fill="none" stroke="#1e1e1e" stroke-width="1.1"/><path d="M846.4 450.7 V447.7 H852.4 L855.8 451.1 V458.4 H847" fill="none" stroke="#1e1e1e" stroke-width="1.3"/><path d="M852 447.1 L856.4 451.5 V447.1 Z" fill="#1e1e1e"/><circle cx="845.2" cy="455.8" r="2.6" fill="none" stroke="#1e1e1e" stroke-width="1.8" stroke-dasharray="1.3 0.75"/><circle cx="845.2" cy="455.8" r="1" fill="#f5f5f5"/><path d="M846.4 468.7 V465.7 H852.4 L855.8 469.1 V476.4 H847" fill="none" stroke="#1e1e1e" stroke-width="1.3"/><path d="M852 465.1 L856.4 469.5 V465.1 Z" fill="#1e1e1e"/><path d="M842.9 469.7 V471.8 Q842.9 474.2 845.1 474.2 Q847.3 474.2 847.3 471.8 V469.7" fill="none" stroke="#1e1e1e" stroke-width="1.7"/><rect x="844.3" y="474" width="1.7" height="4.4" fill="#1e1e1e"/><path d="M822.6 485 L827 489 L822.6 493 Z" fill="none" stroke="#1e1e1e" stroke-width="1.1"/><path d="M846.4 486.7 V483.7 H852.4 L855.8 487.1 V494.4 H847" fill="none" stroke="#1e1e1e" stroke-width="1.3"/><path d="M852 483.1 L856.4 487.5 V483.1 Z" fill="#1e1e1e"/><path d="M842.9 487.7 V489.8 Q842.9 492.2 845.1 492.2 Q847.3 492.2 847.3 489.8 V487.7" fill="none" stroke="#1e1e1e" stroke-width="1.7"/><rect x="844.3" y="492" width="1.7" height="4.4" fill="#1e1e1e"/></svg>
<div class="a" style="left:889px;top:537px;width:133px;height:48px;background:#c8c8c8;overflow:hidden"><div class="a" style="left:17px;top:-6.5px;font-size:50px;line-height:60px;color:#fff;white-space:pre;letter-spacing:-0.9px;-webkit-text-stroke:0.9px #fff;transform:scaleY(1.035);transform-origin:0 40px">dir.by</div></div>
</body></html>
